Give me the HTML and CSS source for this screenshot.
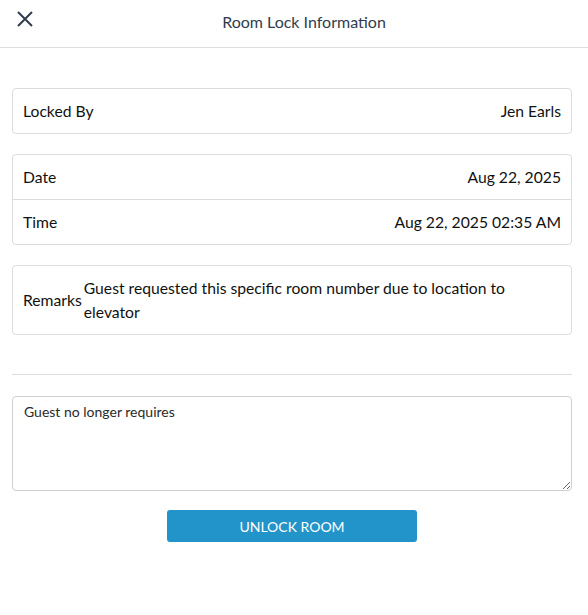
FILE: index.html
```html
<!DOCTYPE html>
<html>
<head>
    <meta charset="UTF-8">
    <title>Room Lock Information</title>
    <meta name="viewport" content="width=device-width, initial-scale=1"/>
    <link rel="stylesheet" href="styles.css">
</head>
<body>
<header class="topbar">
    <button class="close" aria-label="Close">
        <svg width="18" height="18" viewBox="0 0 18 18">
            <path d="M2 2L16 16M16 2L2 16" stroke="#2f3d4c" stroke-width="2" fill="none"/>
        </svg>
    </button>
    <h1 class="title">Room Lock Information</h1>
</header>
<main class="content">
    <div class="card">
        <div class="row">
            <span class="label">Locked By</span>
            <span class="value">Jen Earls</span>
        </div>
    </div>
    <div class="card">
        <div class="row">
            <span class="label">Date</span>
            <span class="value">Aug 22, 2025</span>
        </div>
        <div class="row">
            <span class="label">Time</span>
            <span class="value">Aug 22, 2025 02:35 AM</span>
        </div>
    </div>
    <div class="card">
        <div class="row remarks">
            <span class="label">Remarks</span>
            <span class="text">Guest requested this specific room number due to location to elevator</span>
        </div>
    </div>
    <hr class="divider">
    <textarea class="note">Guest no longer requires</textarea>
    <div class="actions">
        <button class="unlock">UNLOCK ROOM</button>
    </div>
</main>
</body>
</html>
```

FILE: styles.css
```css
body{
    margin: 0;
    background: #fff;
    color: #111;
    font: 16px Lato, "Noto Sans", sans-serif;
}

.topbar{
    display: flex;
    align-items: center;
    height: 47px;
    padding: 0 16px 0 14px;
    border-bottom: 1px solid #dddddd;
}
.close{
    width: 22px;
    height: 22px;
    padding: 0;
    border: 0;
    background: none;
    display: flex;
    align-items: center;
    justify-content: center;
    margin-top: -9px;
}
.title{
    flex: 1;
    margin: 0;
    text-align: center;
    font-size: 16px;
    font-weight: normal;
    color: #2f3d4c;
    padding-bottom: 4px;
}

.content{
    padding: 40px 16px 40px 12px;
}

.card{
    border: 1px solid #dcdcdc;
    border-radius: 4px;
    margin-bottom: 20px;
}
.row{
    display: flex;
    justify-content: space-between;
    align-items: center;
    height: 43px;
    padding: 0 10px 1px;
    font-size: 15.7px;
}
.row + .row{
    border-top: 1px solid #dcdcdc;
}
.remarks{
    height: auto;
    padding: 10px 10px;
    justify-content: flex-start;
    line-height: 24px;
}
.remarks .label{
    flex-shrink: 0;
    margin-right: 2px;
}

.divider{
    border: 0;
    border-top: 1px solid #dcdcdc;
    margin: 39px 0 21px;
}

.note{
    display: block;
    box-sizing: border-box;
    width: 100%;
    height: 95px;
    padding: 6px 11px;
    border: 1px solid #cfcfcf;
    border-radius: 4px;
    font: 14px Lato, "Noto Sans", sans-serif;
    color: #2a2a2a;
}

.actions{
    display: flex;
    justify-content: center;
    margin-top: 19px;
}
.unlock{
    width: 250px;
    height: 32px;
    border: 0;
    border-radius: 3px;
    background: #2394ca;
    color: #fff;
    font: 14px Lato, "Noto Sans", sans-serif;
}
```
